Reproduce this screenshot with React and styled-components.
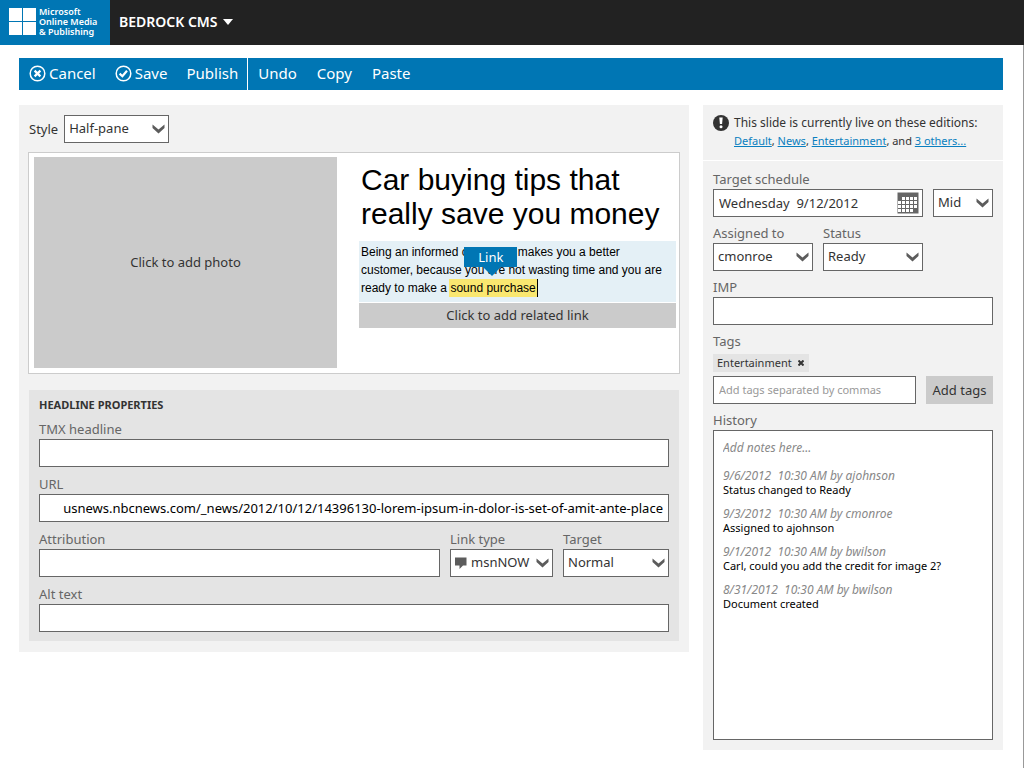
import React from "react";
import styled, { createGlobalStyle, css } from "styled-components";

const c = {
  blue: "#0076b4",
  ink: "#333",
  label: "#666",
  panel: "#f2f2f2",
  section: "#e4e4e4",
  border: "#666",
  grey: "#cbcbcb",
};

const Global = createGlobalStyle`
  *, *::before, *::after { box-sizing: border-box; }
  body { margin: 0; background: #fff; color: ${c.ink}; font: 13px/18px "Noto Sans", "Open Sans", sans-serif; }
  button, input, select { font: inherit; color: inherit; margin: 0; border-radius: 0; }
  h1, h2, p, ul { margin: 0; padding: 0; font-weight: normal; }
  ul { list-style: none; }
`;

/* ---------- header ---------- */
const Header = styled.header`
  display: flex;
  height: 45px;
  background: #222;
  color: #fff;
`;
const Brand = styled.div`
  display: flex;
  align-items: center;
  gap: 3px;
  width: 110px;
  padding: 0 0 2px 9px;
  background: ${c.blue};
  font-size: 9px;
  line-height: 10px;
  font-weight: 600;
  white-space: nowrap;
  svg { flex: none; }
`;
const AppMenu = styled.button`
  display: flex;
  align-items: center;
  gap: 5px;
  padding: 0 9px 2px;
  border: 0;
  background: none;
  font-size: 14px;
  font-weight: 600;
`;

/* ---------- page ---------- */
const Page = styled.main`
  min-height: calc(100vh - 45px);
  padding: 13px 20px 18px 19px;
  border-right: 1px solid #999;
`;
const Toolbar = styled.div`
  display: flex;
  height: 32px;
  margin-bottom: 15px;
  background: ${c.blue};
  color: #fff;
`;
const ToolButton = styled.button`
  display: flex;
  align-items: center;
  gap: 3px;
  padding: 0 9px 2px 10px;
  border: 0;
  background: none;
  font-size: 15px;
`;
const ToolGroup = styled.div`
  display: flex;
  & + & {
    border-left: 1px solid #fff;
    ${ToolButton} { padding-right: 10px; }
  }
`;
const Columns = styled.div`
  display: flex;
  align-items: flex-start;
  gap: 14px;
`;
const Editor = styled.section`
  flex: 1;
  min-width: 0;
  padding: 10px 9px 11px;
  background: ${c.panel};
`;
const Sidebar = styled.aside`
  flex: none;
  width: 300px;
  display: flex;
  flex-direction: column;
  gap: 1px;
`;

/* ---------- form parts ---------- */
const boxed = css`
  width: 100%;
  height: 28px;
  border: 1px solid ${c.border};
  outline: 0;
  background: #fff;
`;
const TextInput = styled.input`
  ${boxed}
  padding: 0 5px 1px;
  font-size: ${(p) => (p.$small ? 11 : 13)}px;
  text-align: ${(p) => (p.$end ? "right" : "left")};
  color: ${(p) => (p.$end ? "#000" : c.ink)};
  &::placeholder { color: #999; opacity: 1; }
`;
const SelectBox = styled.span`
  position: relative;
  display: block;
  select {
    ${boxed}
    appearance: none;
    padding: 0 18px 2px ${(p) => (p.$icon ? 20 : 4)}px;
  }
  svg { position: absolute; pointer-events: none; }
`;
const Chevron = styled.svg`
  top: 9px;
  right: 4px;
`;
const LeadIcon = styled.svg`
  top: 8px;
  left: 5px;
`;
const FieldBox = styled.div`
  flex: ${(p) => (p.$width ? "none" : 1)};
  width: ${(p) => (p.$width ? p.$width + "px" : "auto")};
  min-width: 0;
  label { display: block; line-height: 20px; color: ${c.label}; white-space: nowrap; }
`;
const Row = styled.div`
  display: flex;
  align-items: flex-end;
  gap: 10px;
`;

/* ---------- slide ---------- */
const StyleRow = styled.div`
  display: flex;
  align-items: center;
  gap: 6px;
  margin: 0 0 9px 1px;
  ${SelectBox} { width: 105px; }
`;
const Slide = styled.div`
  display: flex;
  gap: 22px;
  margin-bottom: 16px;
  padding: 4px 3px 5px 5px;
  border: 1px solid #ccc;
  background: #fff;
`;
const Photo = styled.button`
  flex: 303 1 0;
  min-height: 211px;
  padding: 0 0 2px;
  border: 0;
  background: ${c.grey};
`;
const Story = styled.div`
  flex: 317 1 0;
  font-family: "Liberation Sans", Arial, sans-serif;
  color: #000;
`;
const Headline = styled.h1`
  padding: 6px 2px 10px;
  font-size: 30px;
  line-height: 34px;
`;
const Copy = styled.p`
  padding: 2px 2px 5px;
  background: #e4f0f6;
  font-size: 12px;
  line-height: 18px;
`;
const Selected = styled.mark`
  position: relative;
  display: inline-block;
  margin-left: -1px;
  padding: 0 1px;
  border-right: 1px solid #000;
  background: #fae770;
  color: #000;
`;
const LinkTip = styled.button`
  position: absolute;
  left: 15px;
  bottom: calc(100% + 12px);
  width: 53px;
  height: 20px;
  padding: 0;
  border: 0;
  background: ${c.blue};
  color: #fff;
  font: 13px/18px "Noto Sans", "Open Sans", sans-serif;
  &::after {
    content: "";
    position: absolute;
    top: 100%;
    left: 19px;
    border: solid transparent;
    border-width: 9px 9px 0;
    border-top-color: ${c.blue};
  }
`;
const RelatedLink = styled.button`
  display: block;
  width: 100%;
  height: 25px;
  margin-top: 1px;
  padding: 0 0 1px;
  border: 0;
  background: ${c.grey};
  color: ${c.ink};
  font: 13px/18px "Noto Sans", "Open Sans", sans-serif;
`;

/* ---------- headline properties ---------- */
const Properties = styled.section`
  display: flex;
  flex-direction: column;
  gap: 7px;
  margin: 0 1px;
  padding: 5px 10px 9px;
  background: ${c.section};
`;
const SectionTitle = styled.h2`
  margin-bottom: -3px;
  font-size: 11px;
  line-height: 20px;
  font-weight: 700;
`;

/* ---------- sidebar ---------- */
const Notice = styled.div`
  display: flex;
  gap: 5px;
  padding: 9px 10px 10px;
  background: ${c.panel};
  font-size: 12px;
  white-space: nowrap;
  svg { flex: none; }
`;
const Editions = styled.p`
  font-size: 11px;
  a { color: #0a7fc0; }
`;
const Meta = styled.div`
  display: flex;
  flex-direction: column;
  gap: 6px;
  padding: 8px 10px 10px;
  background: ${c.panel};
`;
const DateField = styled.span`
  position: relative;
  display: block;
  svg { position: absolute; top: 3px; right: 4px; }
`;
const Tag = styled.span`
  display: inline-flex;
  align-items: center;
  gap: 6px;
  height: 18px;
  margin: 3px 0 4px;
  padding: 0 5px 0 4px;
  background: ${c.section};
  font-size: 11px;
  vertical-align: top;
  button { display: flex; padding: 0; border: 0; background: none; }
`;
const TagRow = styled(Row)`
  ${TextInput} { flex: 1; min-width: 0; }
`;
const AddButton = styled.button`
  flex: none;
  width: 67px;
  height: 28px;
  padding: 0;
  border: 0;
  background: ${c.grey};
`;
const History = styled.div`
  min-height: 310px;
  padding: 8px 9px;
  border: 1px solid ${c.border};
  background: #fff;
  font-size: 11px;
  line-height: 14px;
`;
const Note = styled.input`
  display: block;
  width: 100%;
  height: 16px;
  margin-bottom: 14px;
  padding: 0;
  border: 0;
  outline: 0;
  font-size: 12px;
  font-style: italic;
  &::placeholder { color: #888; opacity: 1; }
`;
const Entry = styled.li`
  margin-bottom: 10px;
  color: #000;
  em { display: block; color: #888; font-size: 12px; white-space: pre; }
`;

const Select = ({ id, value, icon, name }) => (
  <SelectBox $icon={!!icon}>
    <select id={id} defaultValue={value} aria-label={name}>
      <option>{value}</option>
    </select>
    {icon}
    <Chevron width="13" height="10" viewBox="0 0 13 10">
      <path d="M0.5 0.5 L6.5 5.5 L12.5 0.5 V4 L6.5 9.5 L0.5 4 Z" fill="#5c5c5c" />
    </Chevron>
  </SelectBox>
);

const Field = ({ id, label, width, children }) => (
  <FieldBox $width={width}>
    <label htmlFor={id}>{label}</label>
    {children}
  </FieldBox>
);

const CircleIcon = ({ d }) => (
  <svg width="17" height="17" viewBox="0 0 17 17" fill="none" stroke="#fff">
    <circle cx="8.5" cy="8.5" r="7.3" strokeWidth="1.5" />
    <path d={d} strokeWidth="2.2" />
  </svg>
);

const CalendarIcon = () => (
  <svg width="22" height="22" viewBox="0 0 22 22">
    <path d="M0.5 0.5 H21.5 V21.5 H0.5 Z" fill="#666" />
    <path
      d="M5 5h3v3h-3z M9 5h3v3h-3z M13 5h3v3h-3z M17 5h3v3h-3z M1 9h3v3h-3z M5 9h3v3h-3z M9 9h3v3h-3z M13 9h3v3h-3z M17 9h3v3h-3z M1 13h3v3h-3z M5 13h3v3h-3z M9 13h3v3h-3z M13 13h3v3h-3z M17 13h3v3h-3z M1 17h3v3h-3z M5 17h3v3h-3z M9 17h3v3h-3z M13 17h3v3h-3z"
      fill="#fff"
    />
  </svg>
);

const entries = [
  ["9/6/2012  10:30 AM by ajohnson", "Status changed to Ready"],
  ["9/3/2012  10:30 AM by cmonroe", "Assigned to ajohnson"],
  ["9/1/2012  10:30 AM by bwilson", "Carl, could you add the credit for image 2?"],
  ["8/31/2012  10:30 AM by bwilson", "Document created"],
];

export default function App() {
  return (
    <>
      <Global />
      <Header>
        <Brand>
          <svg width="27" height="28" viewBox="0 0 27 28" fill="#fff">
            <path d="M0 0h13v13H0z M14 0h13v13H14z M0 14h13v13H0z M14 14h13v13H14z" />
          </svg>
          <span>
            Microsoft
            <br />
            Online Media
            <br />
            &amp; Publishing
          </span>
        </Brand>
        <AppMenu>
          BEDROCK CMS
          <svg width="10" height="6" viewBox="0 0 10 6">
            <path d="M0 0h10L5 6z" fill="#fff" />
          </svg>
        </AppMenu>
      </Header>
      <Page>
        <Toolbar>
          <ToolGroup>
            <ToolButton>
              <CircleIcon d="M5.6 5.6 L11.4 11.4 M11.4 5.6 L5.6 11.4" />
              Cancel
            </ToolButton>
            <ToolButton>
              <CircleIcon d="M4.6 8.6 L7.4 11.2 L12 5.8" />
              Save
            </ToolButton>
            <ToolButton>Publish</ToolButton>
          </ToolGroup>
          <ToolGroup>
            <ToolButton>Undo</ToolButton>
            <ToolButton>Copy</ToolButton>
            <ToolButton>Paste</ToolButton>
          </ToolGroup>
        </Toolbar>
        <Columns>
          <Editor>
            <StyleRow>
              <label htmlFor="style">Style</label>
              <Select id="style" value="Half-pane" />
            </StyleRow>
            <Slide>
              <Photo>Click to add photo</Photo>
              <Story>
                <Headline>Car buying tips that really save you money</Headline>
                <Copy>
                  Being an informed consumer makes you a better customer, because you are not wasting
                  time and you are ready to make a{" "}
                  <Selected>
                    sound purchase
                    <LinkTip>Link</LinkTip>
                  </Selected>
                </Copy>
                <RelatedLink>Click to add related link</RelatedLink>
              </Story>
            </Slide>
            <Properties>
              <SectionTitle>HEADLINE PROPERTIES</SectionTitle>
              <Field id="tmx" label="TMX headline">
                <TextInput id="tmx" />
              </Field>
              <Field id="url" label="URL">
                <TextInput
                  id="url"
                  $end
                  defaultValue="usnews.nbcnews.com/_news/2012/10/12/14396130-lorem-ipsum-in-dolor-is-set-of-amit-ante-place"
                />
              </Field>
              <Row>
                <Field id="attribution" label="Attribution">
                  <TextInput id="attribution" />
                </Field>
                <Field id="linktype" label="Link type" width={103}>
                  <Select
                    id="linktype"
                    value="msnNOW"
                    icon={
                      <LeadIcon width="12" height="12" viewBox="0 0 12 12">
                        <path d="M0 0.5h11.5v8H8L4.5 12V8.5H0z" fill="#5c5c5c" />
                      </LeadIcon>
                    }
                  />
                </Field>
                <Field id="target" label="Target" width={106}>
                  <Select id="target" value="Normal" />
                </Field>
              </Row>
              <Field id="alt" label="Alt text">
                <TextInput id="alt" />
              </Field>
            </Properties>
          </Editor>
          <Sidebar>
            <Notice>
              <svg width="16" height="18" viewBox="0 0 16 18">
                <circle cx="8" cy="9" r="8" fill="#333" />
                <path d="M6.3 3.5h3.4l-.6 6.6h-2.2z" fill="#fff" />
                <circle cx="8" cy="12.7" r="1.5" fill="#fff" />
              </svg>
              <div>
                <p>This slide is currently live on these editions:</p>
                <Editions>
                  <a href="#default">Default</a>, <a href="#news">News</a>,{" "}
                  <a href="#entertainment">Entertainment</a>, and <a href="#others">3 others...</a>
                </Editions>
              </div>
            </Notice>
            <Meta>
              <Row>
                <Field id="date" label="Target schedule">
                  <DateField>
                    <TextInput id="date" defaultValue="Wednesday  9/12/2012" />
                    <CalendarIcon />
                  </DateField>
                </Field>
                <FieldBox $width={60}>
                  <Select id="slot" value="Mid" name="Time of day" />
                </FieldBox>
              </Row>
              <Row>
                <Field id="assigned" label="Assigned to" width={100}>
                  <Select id="assigned" value="cmonroe" />
                </Field>
                <Field id="status" label="Status" width={100}>
                  <Select id="status" value="Ready" />
                </Field>
              </Row>
              <Field id="imp" label="IMP">
                <TextInput id="imp" />
              </Field>
              <Field id="tags" label="Tags">
                <Tag>
                  Entertainment
                  <button aria-label="Remove tag">
                    <svg width="6" height="6" viewBox="0 0 6 6" stroke="#333" strokeWidth="2">
                      <path d="M0.5 0.5 L5.5 5.5 M5.5 0.5 L0.5 5.5" />
                    </svg>
                  </button>
                </Tag>
                <TagRow>
                  <TextInput id="tags" $small placeholder="Add tags separated by commas" />
                  <AddButton>Add tags</AddButton>
                </TagRow>
              </Field>
              <Field id="note" label="History">
                <History>
                  <Note id="note" placeholder="Add notes here..." />
                  <ul>
                    {entries.map(([when, what]) => (
                      <Entry key={when}>
                        <em>{when}</em>
                        {what}
                      </Entry>
                    ))}
                  </ul>
                </History>
              </Field>
            </Meta>
          </Sidebar>
        </Columns>
      </Page>
    </>
  );
}
